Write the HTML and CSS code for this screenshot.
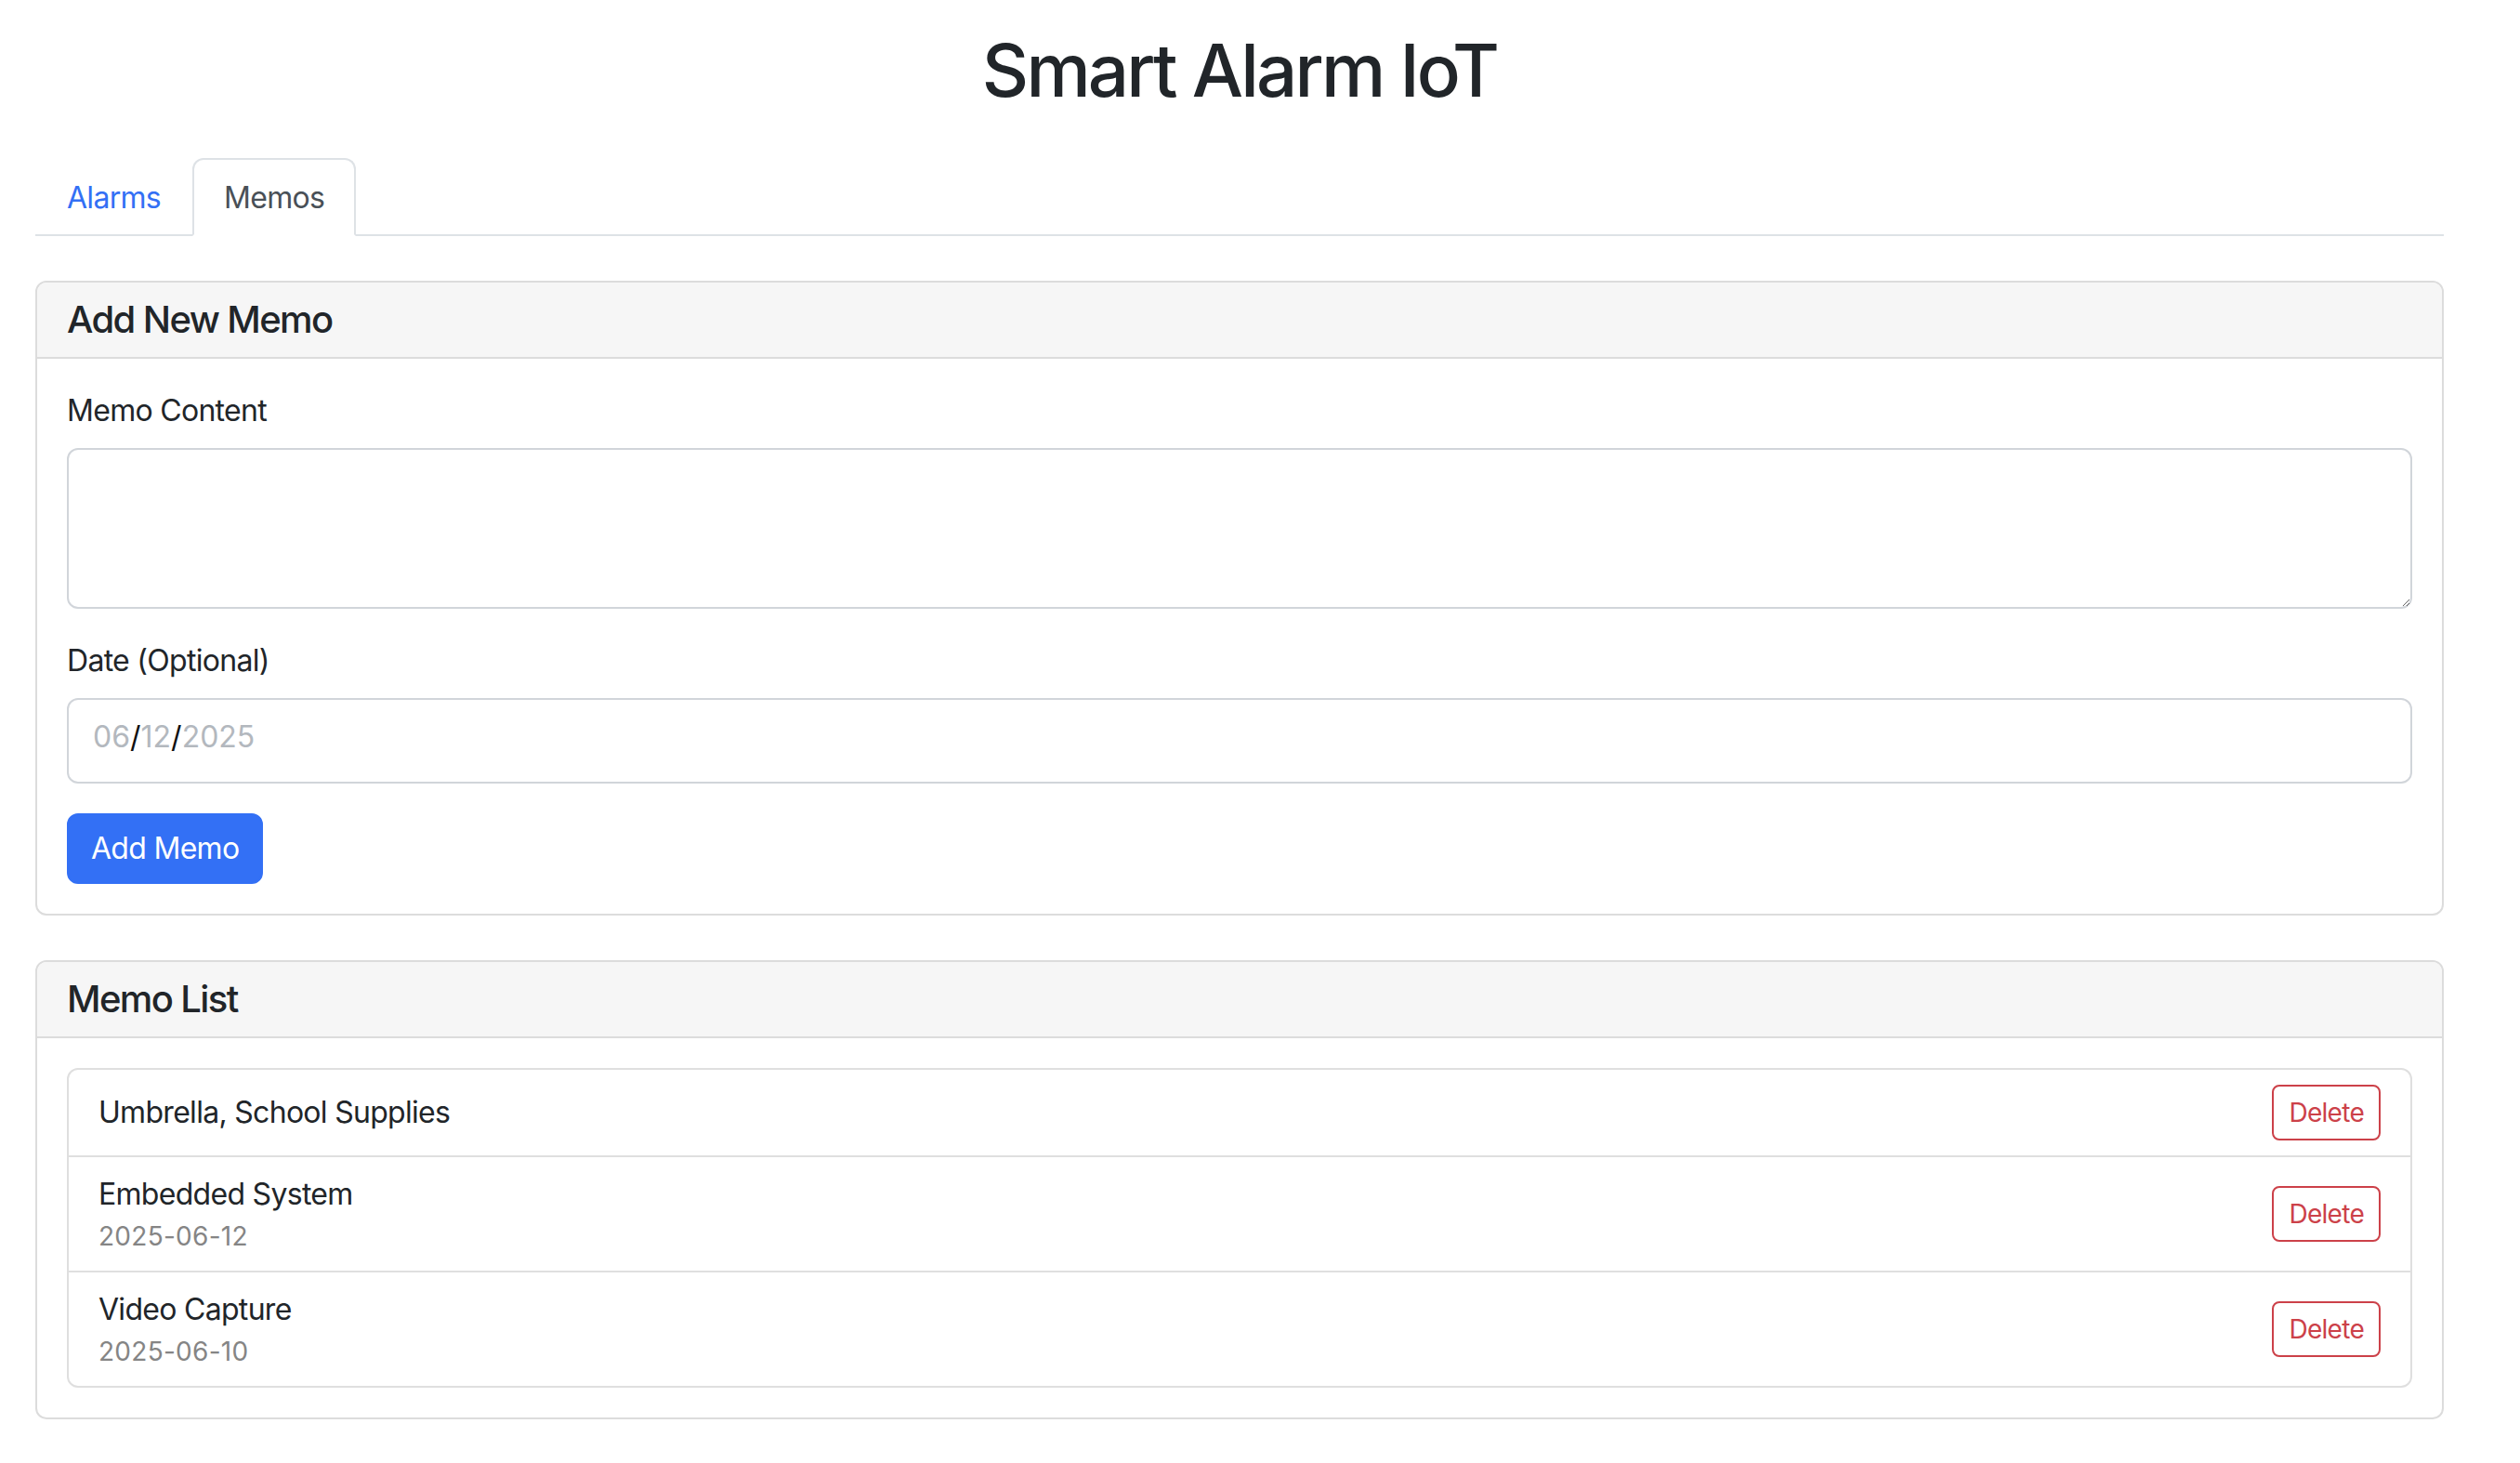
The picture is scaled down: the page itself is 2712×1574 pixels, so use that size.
FILE: index.html
```html
<!DOCTYPE html>
<html lang="en">
<head>
<meta charset="utf-8">
<title>Smart Alarm IoT</title>
<link rel="stylesheet" href="styles.css">
</head>
<body>
<div class="container">
  <h1 class="title">Smart Alarm IoT</h1>
  <ul class="tabs">
    <li><a class="tab">Alarms</a></li>
    <li><a class="tab active">Memos</a></li>
  </ul>

  <section class="card">
    <div class="card-header"><h5>Add New Memo</h5></div>
    <div class="card-body">
      <div class="field">
        <label class="label">Memo Content</label>
        <textarea class="textarea" rows="3"></textarea>
      </div>
      <div class="field">
        <label class="label">Date (Optional)</label>
        <div class="date-input"><span class="ph">06</span><span class="sep">/</span><span class="ph">12</span><span class="sep">/</span><span class="ph">2025</span></div>
      </div>
      <button class="btn-primary">Add Memo</button>
    </div>
  </section>

  <section class="card">
    <div class="card-header"><h5>Memo List</h5></div>
    <div class="card-body">
      <ul class="list">
        <li class="item">
          <div class="item-text"><div class="item-title">Umbrella, School Supplies</div></div>
          <button class="btn-delete">Delete</button>
        </li>
        <li class="item">
          <div class="item-text"><div class="item-title">Embedded System</div><div class="item-date">2025-06-12</div></div>
          <button class="btn-delete">Delete</button>
        </li>
        <li class="item">
          <div class="item-text"><div class="item-title">Video Capture</div><div class="item-date">2025-06-10</div></div>
          <button class="btn-delete">Delete</button>
        </li>
      </ul>
    </div>
  </section>
</div>
</body>
</html>
```

FILE: styles.css
```css
* { box-sizing: border-box; }

html, body {
  margin: 0;
  padding: 0;
  background: #ffffff;
}

body {
  font-family: Inter, "Liberation Sans", Arial, sans-serif;
  font-size: 32px;
  line-height: 48px;
  color: #212529;
  letter-spacing: -0.022em;
}

.container {
  width: 2592px;
  margin-left: 38px;
  padding-top: 28px;
  padding-bottom: 60px;
}

.title {
  margin: 0 0 46px 0;
  text-align: center;
  font-size: 78px;
  line-height: 96px;
  font-weight: 500;
  letter-spacing: -0.036em;
}

.tabs {
  list-style: none;
  margin: 0 0 48px 0;
  padding: 0;
  display: flex;
  border-bottom: 2px solid #dee2e6;
}

.tabs li {
  margin-bottom: -2px;
}

.tab {
  display: block;
  padding: 17px 32px 15px;
  border: 2px solid transparent;
  border-top-left-radius: 12px;
  border-top-right-radius: 12px;
  color: #3370f5;
  font-size: 32px;
  line-height: 48px;
}

.tab.active {
  color: #495057;
  background: #ffffff;
  border-color: #dee2e6 #dee2e6 #ffffff;
}

.card {
  border: 2px solid #dcdcdc;
  border-radius: 12px;
  margin-bottom: 48px;
  overflow: hidden;
}

.card-header {
  background: #f6f6f6;
  border-bottom: 2px solid #dcdcdc;
  padding: 16px 32px;
}

.card-header h5 {
  margin: 0;
  font-size: 40px;
  line-height: 48px;
  font-weight: 500;
  letter-spacing: -0.04em;
}

.card-body {
  padding: 32px;
}

.field {
  margin-bottom: 32px;
}

.label {
  display: block;
  margin-bottom: 16px;
  font-size: 32px;
  line-height: 48px;
}

.textarea {
  display: block;
  width: 100%;
  height: 173px;
  padding: 12px 24px;
  border: 2px solid #d1d5da;
  border-radius: 12px;
  font: inherit;
  resize: vertical;
  outline: none;
}

.date-input {
  display: flex;
  align-items: center;
  height: 92px;
  padding: 0 26px 8px;
  border: 2px solid #d1d5da;
  border-radius: 12px;
  font-size: 32px;
  line-height: 48px;
  letter-spacing: 0;
}

.date-input .ph { color: #b3b8be; }
.date-input .sep { color: #111111; }

.btn-primary {
  display: inline-block;
  padding: 12px 24px;
  border: 2px solid #3370f5;
  border-radius: 12px;
  background: #3370f5;
  color: #ffffff;
  font: inherit;
  letter-spacing: inherit;
}

.list {
  list-style: none;
  margin: 0;
  padding: 0;
  border: 2px solid #dfdfdf;
  border-radius: 12px;
}

.item {
  display: flex;
  justify-content: space-between;
  align-items: center;
  padding: 16px 32px;
}

.item + .item {
  border-top: 2px solid #dfdfdf;
}

.item-title {
  font-size: 32px;
  line-height: 48px;
}

.item-date {
  font-size: 28px;
  line-height: 42px;
  color: #858585;
  letter-spacing: 0.01em;
}

.btn-delete {
  padding: 7px 16px;
  border: 2px solid #cc4149;
  border-radius: 8px;
  background: #ffffff;
  color: #cc4149;
  font-family: inherit;
  font-size: 28px;
  line-height: 42px;
  letter-spacing: inherit;
}
```
